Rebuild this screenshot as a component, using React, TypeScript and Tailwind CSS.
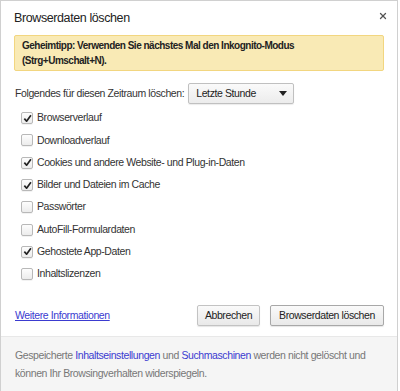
import { X } from 'lucide-react';

const items = [
  { label: 'Browserverlauf', checked: true },
  { label: 'Downloadverlauf', checked: false },
  { label: 'Cookies und andere Website- und Plug-in-Daten', checked: true },
  { label: 'Bilder und Dateien im Cache', checked: true },
  { label: 'Passwörter', checked: false },
  { label: 'AutoFill-Formulardaten', checked: false },
  { label: 'Gehostete App-Daten', checked: true },
  { label: 'Inhaltslizenzen', checked: false },
];

function Checkbox({ checked }: { checked: boolean }) {
  return (
    <span className="flex h-[12px] w-[12px] shrink-0 items-center justify-center rounded-[2px] border border-[#b8b8b8] bg-gradient-to-b from-[#fdfdfd] to-[#ececec] shadow-[0_1px_0_rgba(0,0,0,0.05)]">
      {checked && (
        <svg width="9" height="9" viewBox="0 0 10 10">
          <path d="M1.5 5.2 L4 8 L8.8 1.5" fill="none" stroke="#222" strokeWidth="1.9" strokeLinejoin="round" />
        </svg>
      )}
    </span>
  );
}

export default function App() {
  return (
    <div className="h-[391px] w-[400px] bg-white font-['Liberation_Sans',Arial,sans-serif] text-[10.5px] tracking-[-0.4px] text-[#333]">
      <div className="flex h-full w-[398px] flex-col border-x border-t border-[#d0d0d0] bg-white">
        <div className="flex items-start justify-between pl-[13px] pr-[9px] pt-[7px]">
          <h1 className="text-[12.5px] leading-[20px] text-[#222]">Browserdaten löschen</h1>
          <X className="mt-[3px] h-[10px] w-[10px] text-[#555]" strokeWidth={3} />
        </div>

        <div className="mx-[13px] mt-[7px] rounded-[2px] border border-[#f2d680] bg-[#f9eab5] px-[7px] py-[2px] text-[10px] font-bold leading-[15px] tracking-[-0.5px] text-[#222]">
          Geheimtipp: Verwenden Sie nächstes Mal den Inkognito-Modus
          <br />
          (Strg+Umschalt+N).
        </div>

        <div className="mt-[12px] flex items-center pl-[14px]">
          <span>Folgendes für diesen Zeitraum löschen:</span>
          <div className="ml-[4px] flex h-[21px] w-[106px] items-center justify-between rounded-[2px] border border-[#c0c0c0] bg-gradient-to-b from-[#fafafa] to-[#ececec] pl-[7px] pr-[6px] shadow-[0_1px_1px_rgba(0,0,0,0.08)]">
            <span className="text-[#222]">Letzte Stunde</span>
            <svg width="8" height="5" viewBox="0 0 8 5">
              <path d="M0 0 H8 L4 5 Z" fill="#222" />
            </svg>
          </div>
        </div>

        <div className="mt-[3px] flex flex-col pl-[20px]">
          {items.map((item) => (
            <div key={item.label} className="flex h-[22.3px] items-center gap-[4px]">
              <Checkbox checked={item.checked} />
              <span>{item.label}</span>
            </div>
          ))}
        </div>

        <div className="mt-[20px] flex items-center justify-between pl-[14px] pr-[13px]">
          <a className="text-[#3b3bd0] underline">Weitere Informationen</a>
          <div className="flex gap-[10px]">
            <button className="h-[21px] w-[63px] rounded-[2px] border border-[#c3c3c3] bg-gradient-to-b from-[#fafafa] to-[#e9e9e9] text-[10.5px] tracking-[-0.4px] text-[#222] shadow-[0_1px_1px_rgba(0,0,0,0.1)]">
              Abbrechen
            </button>
            <button className="h-[21px] w-[114px] rounded-[2px] border border-[#a8a8a8] bg-gradient-to-b from-[#fafafa] to-[#e9e9e9] text-[10.5px] tracking-[-0.4px] text-[#222] shadow-[0_1px_1px_rgba(0,0,0,0.1)]">
              Browserdaten löschen
            </button>
          </div>
        </div>

        <div className="mt-[10px] flex-1 border-t border-[#e8e8e8] bg-[#f5f5f5] pl-[14px] pr-[10px] pt-[9px] text-[10.5px] leading-[18px] text-[#777]">
          Gespeicherte <span className="text-[#3b3bd0]">Inhaltseinstellungen</span> und{' '}
          <span className="text-[#3b3bd0]">Suchmaschinen</span> werden nicht gelöscht und
          <br />
          können Ihr Browsingverhalten widerspiegeln.
        </div>
      </div>
    </div>
  );
}
